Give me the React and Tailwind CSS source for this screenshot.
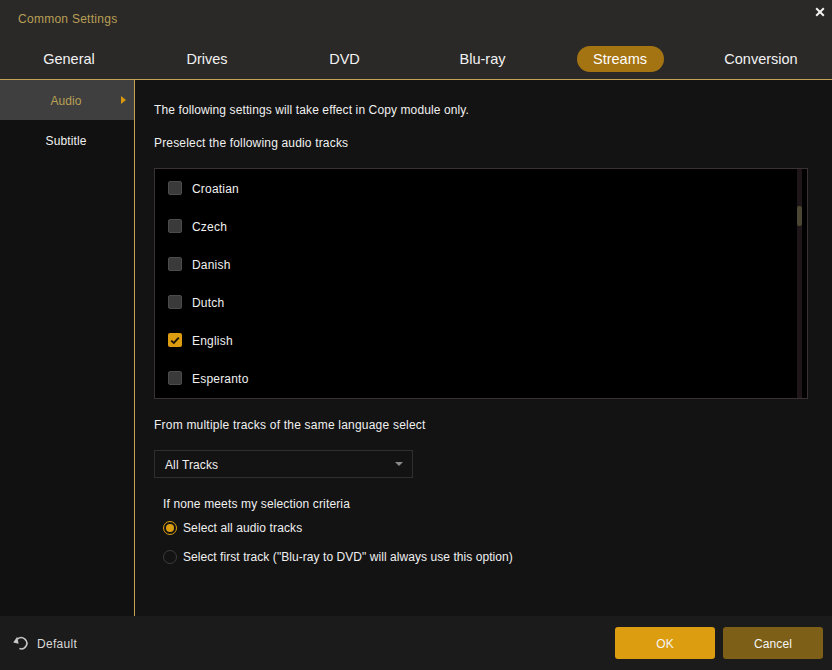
import React from "react";

const tabs = ["General", "Drives", "DVD", "Blu-ray", "Streams", "Conversion"];
const langs = [
  ["Croatian", false],
  ["Czech", false],
  ["Danish", false],
  ["Dutch", false],
  ["English", true],
  ["Esperanto", false],
];

function Row({ name, checked }) {
  return (
    <div className="flex h-[38px] items-center pl-[13px]">
      {checked ? (
        <span className="flex h-[14px] w-[14px] items-center justify-center rounded-[2px] bg-[#dc9e10]">
          <svg width="10" height="9" viewBox="0 0 10 9" fill="none">
            <path d="M1.2 4.6 L3.8 7 L8.8 1.6" stroke="#1c1606" strokeWidth="1.9" />
          </svg>
        </span>
      ) : (
        <span className="h-[14px] w-[14px] rounded-[2px] border border-[#4c4c4c] bg-[#3a3a3a]" />
      )}
      <span className="ml-[10px] pt-[1px] text-[12px] tracking-[0.2px] text-[#f0f0f0]">{name}</span>
    </div>
  );
}

export default function App() {
  return (
    <div
      className="flex h-[670px] w-[832px] flex-col overflow-hidden bg-[#131313] text-[12px] tracking-[0.11px] text-[#f0f0f0]"
      style={{ fontFamily: '"Liberation Sans", Arial, sans-serif' }}
    >
      <header className="h-[80px] shrink-0 border-b border-[#c5a253] bg-[#2a2928]">
        <div className="flex h-[38px] items-start justify-between pl-[18px] pr-[7px]">
          <span className="mt-[12px] text-[12px] leading-[14px] tracking-[0.27px] text-[#b99f55]">Common Settings</span>
          <svg className="mt-[7px]" width="10" height="10" viewBox="0 0 10 10" fill="none">
            <path d="M1.2 1.2 L8.8 8.8 M8.8 1.2 L1.2 8.8" stroke="#f2f2f2" strokeWidth="2" />
          </svg>
        </div>
        <nav className="grid h-[41px] grid-cols-[138px_138px_137px_139px_136px_144px] items-start tracking-normal">
          {tabs.map((t) =>
            t === "Streams" ? (
              <div key={t} className="flex justify-center pt-[8px]">
                <span className="flex h-[26px] w-[87px] items-center justify-center rounded-[13px] bg-[#a57412] pt-[1px] text-[14.5px] text-white">
                  {t}
                </span>
              </div>
            ) : (
              <div
                key={t}
                className={
                  t === "Conversion"
                    ? "flex h-[42px] items-center justify-center pl-[2px] pt-[2px] text-[14.5px] text-[#f2f2f2]"
                    : "flex h-[42px] items-center justify-center pt-[2px] text-[14.5px] text-[#f2f2f2]"
                }
              >
                {t}
              </div>
            )
          )}
        </nav>
      </header>

      <div className="flex min-h-0 flex-1">
        <aside className="w-[135px] shrink-0 border-r border-[#c5a253] bg-[#111111]">
          <div className="relative flex h-[40px] items-center justify-center bg-[#3f3f3f] pr-[2px] pt-[1px] text-[#b99f55]">
            Audio
            <svg className="absolute left-[121px] top-[16px]" width="5" height="8" viewBox="0 0 5 8">
              <path d="M0 0 L5 4 L0 8 Z" fill="#d9980f" />
            </svg>
          </div>
          <div className="flex h-[40px] items-center justify-center pr-[2px] pt-[1px]">Subtitle</div>
        </aside>

        <main className="min-w-0 flex-1 pl-[19px] pr-[24px]">
          <p className="mt-[23px] leading-[14px]">The following settings will take effect in Copy module only.</p>
          <p className="mt-[19px] leading-[14px] tracking-[0.17px]">Preselect the following audio tracks</p>
          <div className="relative mt-[18px] h-[231px] w-[654px] border border-[#3a3232] bg-black">
            {langs.map(([n, c]) => (
              <Row key={n} name={n} checked={c} />
            ))}
            <div className="absolute right-[5px] top-0 h-full w-[5px] bg-[#1e1618]">
              <div className="absolute left-0 top-[37px] h-[20px] w-[5px] rounded-[2px] bg-[#4b4533]" />
            </div>
          </div>
          <p className="mt-[19px] leading-[14px] tracking-[0.21px]">From multiple tracks of the same language select</p>
          <div className="mt-[18px] flex h-[28px] w-[259px] items-center justify-between border border-[#2f2f2f] pl-[10px] pr-[9px]">
            <span className="pt-[1px]">All Tracks</span>
            <svg width="8" height="4" viewBox="0 0 8 4">
              <path d="M0 0 H8 L4 4 Z" fill="#8a8a8a" />
            </svg>
          </div>
          <div className="pl-[9px]">
            <p className="mt-[19px] leading-[14px] tracking-[0.14px]">If none meets my selection criteria</p>
            <div className="mt-[2px] flex h-[29px] items-center">
              <span className="flex h-[14px] w-[14px] items-center justify-center rounded-full border-[1.5px] border-[#dc9e10]">
                <span className="h-[8px] w-[8px] rounded-full bg-[#dc9e10]" />
              </span>
              <span className="ml-[6px]">Select all audio tracks</span>
            </div>
            <div className="flex h-[29px] items-center">
              <span className="h-[14px] w-[14px] rounded-full border border-[#3c3c3c]" />
              <span className="ml-[6px] tracking-[0.06px]">Select first track ("Blu-ray to DVD" will always use this option)</span>
            </div>
          </div>
        </main>
      </div>

      <footer className="flex h-[54px] shrink-0 items-center justify-between bg-[#1b1b1b] pl-[13px] pr-[9px]">
        <div className="flex items-center">
          <svg width="16" height="14" viewBox="0 0 16 14" fill="none">
            <path d="M4.4 3.2 A5.6 5.6 0 1 1 6.4 12.6" stroke="#c8c8c8" strokeWidth="1.6" />
            <path d="M0.2 6.4 L4.2 0.8 L5.6 7.8 Z" fill="#c8c8c8" />
          </svg>
          <span className="ml-[8px] pt-[1px] tracking-[0.3px] text-[#d8d8d8]">Default</span>
        </div>
        <div className="flex gap-[8px]">
          <button className="h-[32px] w-[100px] rounded-[3px] bg-[#dc9e10] pt-[1px] text-[12px] text-[#f5f5f5]">OK</button>
          <button className="h-[32px] w-[100px] rounded-[3px] bg-[#7d5f17] pt-[1px] text-[12px] text-[#f5f5f5]">Cancel</button>
        </div>
      </footer>
    </div>
  );
}
